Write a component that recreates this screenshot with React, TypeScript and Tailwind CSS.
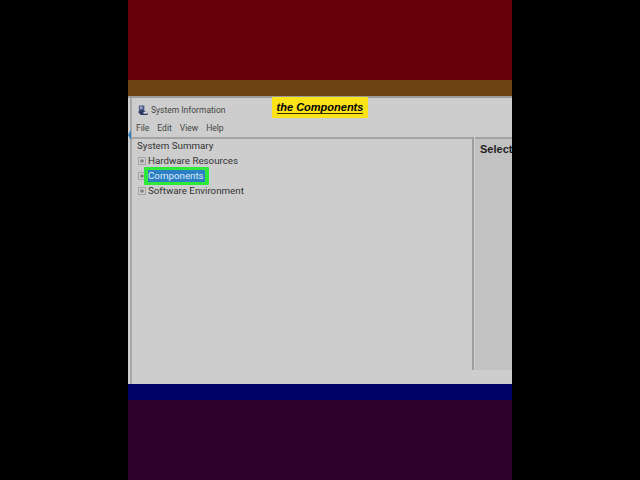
const treeItems = [
  { label: "Hardware Resources", selected: false },
  { label: "Components", selected: true },
  { label: "Software Environment", selected: false },
];

function Expander() {
  return (
    <svg width="8" height="8" viewBox="0 0 8 8" className="shrink-0">
      <rect x="0.5" y="0.5" width="7" height="7" fill="none" stroke="#a5a5a5" />
      <path d="M2 4H6M4 2V6" stroke="#666" />
    </svg>
  );
}

function AppIcon() {
  return (
    <svg width="10" height="11" viewBox="0 0 11 11">
      <rect x="1" y="0" width="6" height="6" fill="#4a5585" />
      <rect x="2" y="1" width="3" height="3" fill="#9aa4c8" />
      <path d="M0 7L5 5L10.5 8L10.5 10.5H3Z" fill="#2c3560" />
      <rect x="6" y="7" width="4" height="2" fill="#d9d9e2" />
    </svg>
  );
}

export default function App() {
  return (
    <div className="w-[640px] h-[480px] bg-black flex justify-center font-['Roboto',sans-serif] overflow-hidden">
      <div className="w-[384px] h-full flex flex-col relative">
        <div className="h-[80px] bg-[#650008]" />
        <div className="h-[16px] bg-[#6e4412]" />

        {/* System Information window */}
        <div className="h-[288px] bg-[#cdcdcd] border-t-2 border-[#9b9b9b] flex flex-col pl-[2px]">
          <div className="h-[22px] pt-[3px] flex items-center gap-[2px] pl-[6px] border-l-2 border-[#a8a8a8]">
            <AppIcon />
            <span className="text-[8.5px] text-[#444] leading-none ml-[1px]">System Information</span>
          </div>
          <div className="h-[17px] flex items-center gap-[8px] pl-[4px] text-[8.5px] text-[#444] leading-none border-l-2 border-[#a8a8a8]">
            <span>File</span>
            <span>Edit</span>
            <span>View</span>
            <span>Help</span>
          </div>
          <div className="flex-1 flex border-l-2 border-[#a8a8a8]">
            <div className="w-[340px] h-[233px] border-t-2 border-[#a3a3a3] pl-[5px] text-[9.75px] text-[#333]">
              <div className="h-[15px] leading-[15px] -mt-[1px]">System Summary</div>
              {treeItems.map((item) => (
                <div key={item.label} className="h-[15px] flex items-center gap-[2px] pl-[1px]">
                  <Expander />
                  {item.selected ? (
                    <span className="bg-[#2fe83c] px-[4px] py-[3px] -mx-[4px] -my-[3px] flex rounded-[1px]">
                      <span className="bg-[#2c7fc4] text-[#dcecf6] leading-[12px] pr-[1px]">{item.label}</span>
                    </span>
                  ) : (
                    <span className="leading-[15px]">{item.label}</span>
                  )}
                </div>
              ))}
            </div>
            <div className="w-[2px] h-[233px] bg-[#9e9e9e]" />
            <div className="flex-1 h-[233px] bg-[#c2c2c2] border-t-2 border-[#a3a3a3] ml-[1px] pl-[5px] pt-[2px] overflow-hidden">
              <span className="block text-[11px] leading-[16px] font-bold text-[#222] font-['Liberation_Sans',sans-serif] whitespace-nowrap">
                Select
              </span>
            </div>
          </div>
        </div>

        <div className="h-[16px] bg-[#000066]" />
        <div className="flex-1 bg-[#2f002c]" />

        {/* Caption overlay */}
        <div className="absolute left-[144px] top-[97px] w-[96px] h-[21px] bg-[#fbe31a] flex items-center justify-center">
          <span className="text-[11px] italic font-bold text-black leading-[12px] border-b border-[#3a3000] font-['Liberation_Sans',sans-serif] whitespace-nowrap">
            the Components
          </span>
        </div>

        {/* Bit of the window behind, peeking out on the left edge */}
        <div className="absolute left-0 top-[130px] w-[3px] h-[10px] bg-[#2f7fc0] [clip-path:polygon(100%_0,100%_100%,0_50%)]" />
      </div>
    </div>
  );
}
